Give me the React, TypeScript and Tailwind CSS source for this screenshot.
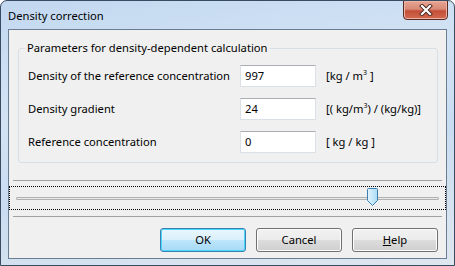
import type { ReactNode } from 'react'

const font = { fontFamily: '"Noto Sans", "Open Sans", sans-serif' }

function Row({ label, value, unit }: { label: string; value: string; unit: ReactNode }) {
  return (
    <div className="flex items-center h-[22px]">
      <span className="w-[212px] text-[11.2px] text-black whitespace-nowrap">{label}</span>
      <div className="w-[76px] h-[22px] bg-white border border-[#dbdfe6] border-t-[#abadb3] px-[4px] flex items-center text-[11.2px] text-black">
        {value}
      </div>
      <span className="ml-[10px] text-[11.2px] text-black whitespace-nowrap">{unit}</span>
    </div>
  )
}

function Btn({ children, primary }: { children: ReactNode; primary?: boolean }) {
  return (
    <div
      className={`w-[86px] h-[24px] rounded-[3px] border flex items-center justify-center text-[11.2px] text-black ${
        primary
          ? 'border-[#3c7fb1] shadow-[inset_0_0_0_1px_#48d8fb] bg-[linear-gradient(#eaf6fd_0%,#d9f0fc_50%,#bee6fd_50%,#a7d9f5_100%)]'
          : 'border-[#707070] shadow-[inset_0_0_0_1px_#fcfcfc] bg-[linear-gradient(#f2f2f2_0%,#ebebeb_50%,#dddddd_50%,#cfcfcf_100%)]'
      }`}
    >
      {children}
    </div>
  )
}

const sup = 'text-[7px] relative -top-[5px]'

export default function App() {
  return (
    <div
      style={font}
      className="w-[455px] h-[266px] flex flex-col rounded-t-[7px] border border-[#3a4a60] overflow-hidden bg-[linear-gradient(170deg,#c2d8f0_0%,#d3e3f4_35%,#c9dcf0_60%,#dfe7ef_100%)]"
    >
      {/* Title bar */}
      <div className="h-[28px] flex items-start shrink-0">
        <span className="ml-[7px] mt-[7px] text-[11.2px] text-black leading-[16px]">Density correction</span>
        <div className="ml-auto mr-[6px] w-[45px] h-[20px] -mt-px rounded-b-[4px] border border-[#5b2a23] flex items-center justify-center bg-[linear-gradient(#e8a493_0%,#d98a77_45%,#c44f39_55%,#d26a50_100%)] shadow-[inset_0_0_0_1px_#eab4a6]">
          <svg width="14" height="12" viewBox="0 0 14 12">
            <path d="M3 2 L11 10 M11 2 L3 10" stroke="#4a2620" strokeWidth="4" strokeLinecap="square" />
            <path d="M3 2 L11 10 M11 2 L3 10" stroke="#ffffff" strokeWidth="2.2" strokeLinecap="square" />
          </svg>
        </div>
      </div>

      {/* Client area */}
      <div className="ml-[7px] w-[439px] h-[230px] border border-[#6b7d93] bg-[#f0f0f0] flex flex-col">
        {/* Group box */}
        <div className="mt-[18px] ml-[9px] w-[420px] h-[115px] border border-[#d5dfe5] rounded-[3px] flex flex-col pl-[9px]">
          <span className="-mt-[9px] -ml-[3px] self-start bg-[#f0f0f0] px-[2px] text-[11.2px] leading-[16px] text-black">
            Parameters for density-dependent calculation
          </span>
          <div className="mt-[9px] flex flex-col gap-[11px]">
            <Row
              label="Density of the reference concentration"
              value="997"
              unit={
                <>
                  [kg / m<sup className={sup}>3</sup> ]
                </>
              }
            />
            <Row
              label="Density gradient"
              value="24"
              unit={
                <>
                  [( kg/m<sup className={sup}>3</sup>) / (kg/kg)]
                </>
              }
            />
            <Row label="Reference concentration" value="0" unit="[ kg / kg ]" />
          </div>
        </div>

        <div className="mt-[17px] mx-[4px] h-px bg-[#a0a0a0] shrink-0" />

        {/* Slider */}
        <div className="mt-[5px] h-[24px] border border-dotted border-black relative flex items-center px-[6px] shrink-0">
          <div className="w-full h-[3px] border border-[#b0b0b0] bg-[#e7eaea] rounded-[1px]" />
          <svg className="absolute left-[357px] top-[1px]" width="11" height="18" viewBox="0 0 11 18">
            <defs>
              <linearGradient id="th" x1="0" y1="0" x2="1" y2="0">
                <stop offset="0" stopColor="#e3f4fc" />
                <stop offset="1" stopColor="#a9dbf6" />
              </linearGradient>
            </defs>
            <path
              d="M1.5 0.5 H9.5 A1 1 0 0 1 10.5 1.5 V12.5 L5.5 17.5 L0.5 12.5 V1.5 A1 1 0 0 1 1.5 0.5 Z"
              fill="url(#th)"
              stroke="#3c7fb1"
            />
          </svg>
        </div>

        <div className="mt-[6px] mx-[4px] h-px bg-[#a0a0a0] shrink-0" />

        {/* Buttons */}
        <div className="mt-[11px] mr-[8px] flex justify-end gap-[10px]">
          <Btn primary>OK</Btn>
          <Btn>Cancel</Btn>
          <Btn>
            <span>
              <span className="underline">H</span>elp
            </span>
          </Btn>
        </div>
      </div>
    </div>
  )
}
